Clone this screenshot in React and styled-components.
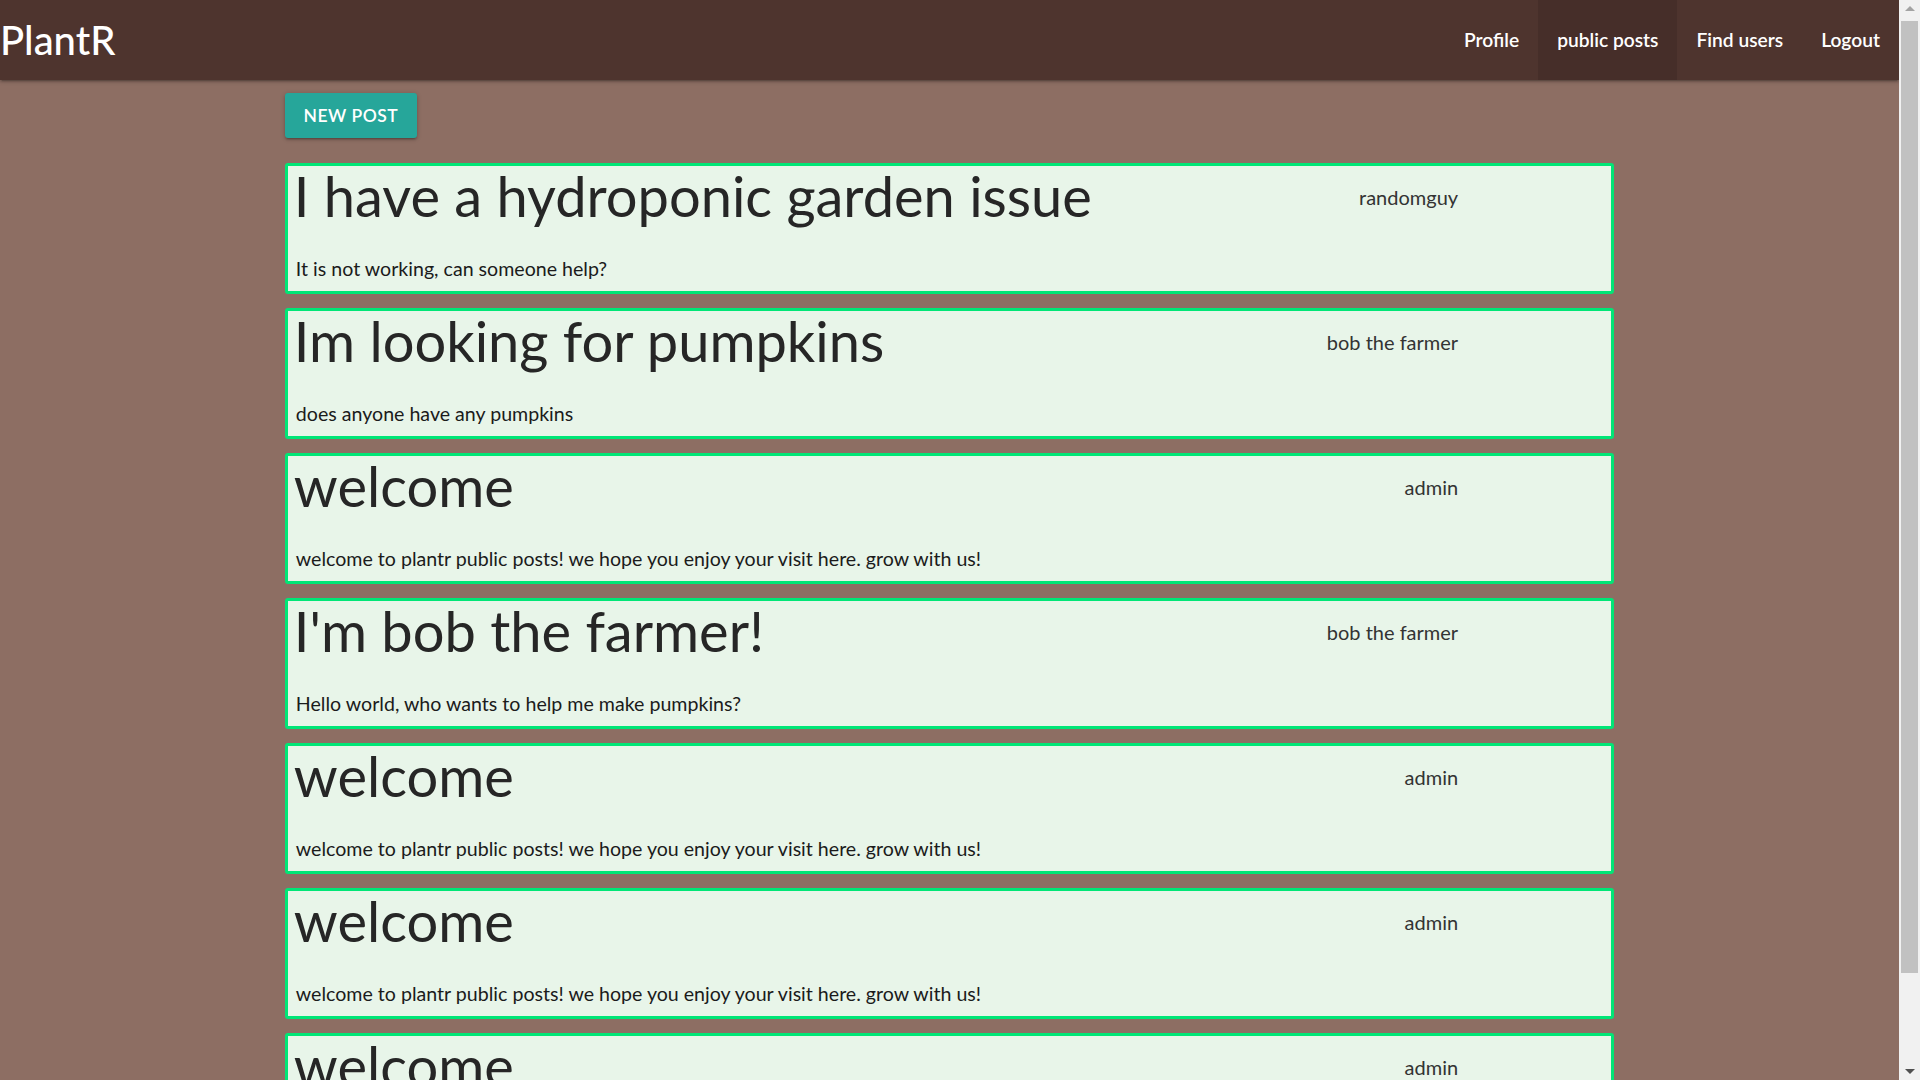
import React from 'react'
import styled, { createGlobalStyle } from 'styled-components'

const GlobalStyle = createGlobalStyle`
    html, body {
        margin: 0;
        padding: 0;
        height: 100%;
        overflow: hidden;
    }
    body {
        background: #8d6e63;
        font-family: Lato, "Noto Sans", sans-serif;
        color: rgba(0, 0, 0, 0.87);
    }
    * {
        box-sizing: border-box;
    }
`

const welcome = {
    title: 'welcome',
    author: 'admin',
    body: 'welcome to plantr public posts! we hope you enjoy your visit here. grow with us!',
}

const posts = [
    { title: 'I have a hydroponic garden issue', author: 'randomguy', body: 'It is not working, can someone help?' },
    { title: 'Im looking for pumpkins', author: 'bob the farmer', body: 'does anyone have any pumpkins' },
    welcome,
    { title: "I'm bob the farmer!", author: 'bob the farmer', body: 'Hello world, who wants to help me make pumpkins?' },
    welcome,
    welcome,
    welcome,
]

const links = [
    { label: 'Profile' },
    { label: 'public posts', active: true },
    { label: 'Find users' },
    { label: 'Logout' },
]

const Window = styled.div`
    display: flex;
    height: 100vh;
    width: 100vw;
`

const Page = styled.div`
    flex: 1;
    overflow: hidden;
    display: flex;
    flex-direction: column;
`

const Nav = styled.nav`
    height: 80px;
    flex-shrink: 0;
    background: #4e342e;
    display: flex;
    align-items: stretch;
    justify-content: space-between;
    box-shadow: 0 2px 2px 0 rgba(0,0,0,.14), 0 3px 1px -2px rgba(0,0,0,.12), 0 1px 5px 0 rgba(0,0,0,.2);
    position: relative;
    z-index: 2;
`

const Logo = styled.a`
    color: #fff;
    font-size: 40px;
    font-weight: 500;
    line-height: 80px;
    text-decoration: none;
`

const Links = styled.ul`
    display: flex;
    list-style: none;
    margin: 0;
    padding: 0;
`

const NavLink = styled.li`
    padding: 0 19px;
    line-height: 80px;
    font-size: 19.2px;
    font-weight: 600;
    color: #fff;
    background: ${(p) => (p.$active ? 'rgba(0, 0, 0, 0.1)' : 'transparent')};
`

const Container = styled.main`
    width: 70%;
    margin: 0 auto;
    padding-top: 13px;
`

const NewPostButton = styled.button`
    display: block;
    height: 45px;
    width: 132px;
    padding: 0;
    border: none;
    border-radius: 3px;
    background: #26a69a;
    color: #fff;
    font-family: Lato, "Noto Sans", sans-serif;
    font-size: 17.5px;
    font-weight: 600;
    letter-spacing: 0.5px;
    text-transform: uppercase;
    white-space: nowrap;
    text-align: center;
    box-shadow: 0 2px 2px 0 rgba(0,0,0,.14), 0 3px 1px -2px rgba(0,0,0,.12), 0 1px 5px 0 rgba(0,0,0,.2);
    margin-bottom: 25px;
`

const PostList = styled.div`
    display: flex;
    flex-direction: column;
    gap: 14px;
`

const Card = styled.article`
    height: 131px;
    flex-shrink: 0;
    background: #e8f5e9;
    border: 3px solid #00e676;
    border-radius: 3px;
    display: flex;
    flex-direction: column;
`

const CardHead = styled.div`
    display: flex;
    align-items: flex-start;
    height: 59px;
`

const Title = styled.h3`
    flex: 1;
    margin: 0;
    padding-left: 6px;
    font-size: 56px;
    font-weight: 400;
    line-height: 59px;
    color: #262626;
    white-space: nowrap;
`

const Author = styled.span`
    margin: 19px 153px 0 0;
    font-size: 20px;
    line-height: 24px;
    color: #333;
`

const Body = styled.p`
    margin: 32px 0 0;
    padding-left: 8px;
    font-size: 19.6px;
    line-height: 24px;
    color: #1b1b1b;
`

const Scrollbar = styled.div`
    width: 21px;
    flex-shrink: 0;
    background: #f1f1f1;
    display: flex;
    flex-direction: column;
    align-items: center;
`

const Arrow = styled.div`
    height: 17px;
    flex-shrink: 0;
    display: flex;
    align-items: center;
    justify-content: center;
    &::before {
        content: '';
        border-left: 5px solid transparent;
        border-right: 5px solid transparent;
        ${(p) => (p.$down ? 'border-top: 5px solid #505050;' : 'border-bottom: 5px solid #a3a3a3;')}
    }
`

const Thumb = styled.div`
    width: 17px;
    height: 952px;
    margin-top: 4px;
    background: #c1c1c1;
`

const Track = styled.div`
    flex: 1;
`

const App = () => (
    <>
        <GlobalStyle />
        <Window>
            <Page>
                <Nav>
                    <Logo>PlantR</Logo>
                    <Links>
                        {links.map((l) => (
                            <NavLink key={l.label} $active={l.active}>{l.label}</NavLink>
                        ))}
                    </Links>
                </Nav>

                <Container>
                    <NewPostButton>New Post</NewPostButton>

                    <PostList>
                        {posts.map((post, i) => (
                            <Card key={i}>
                                <CardHead>
                                    <Title>{post.title}</Title>
                                    <Author>{post.author}</Author>
                                </CardHead>
                                <Body>{post.body}</Body>
                            </Card>
                        ))}
                    </PostList>
                </Container>
            </Page>

            <Scrollbar>
                <Arrow />
                <Thumb />
                <Track />
                <Arrow $down />
            </Scrollbar>
        </Window>
    </>
)

export default App
